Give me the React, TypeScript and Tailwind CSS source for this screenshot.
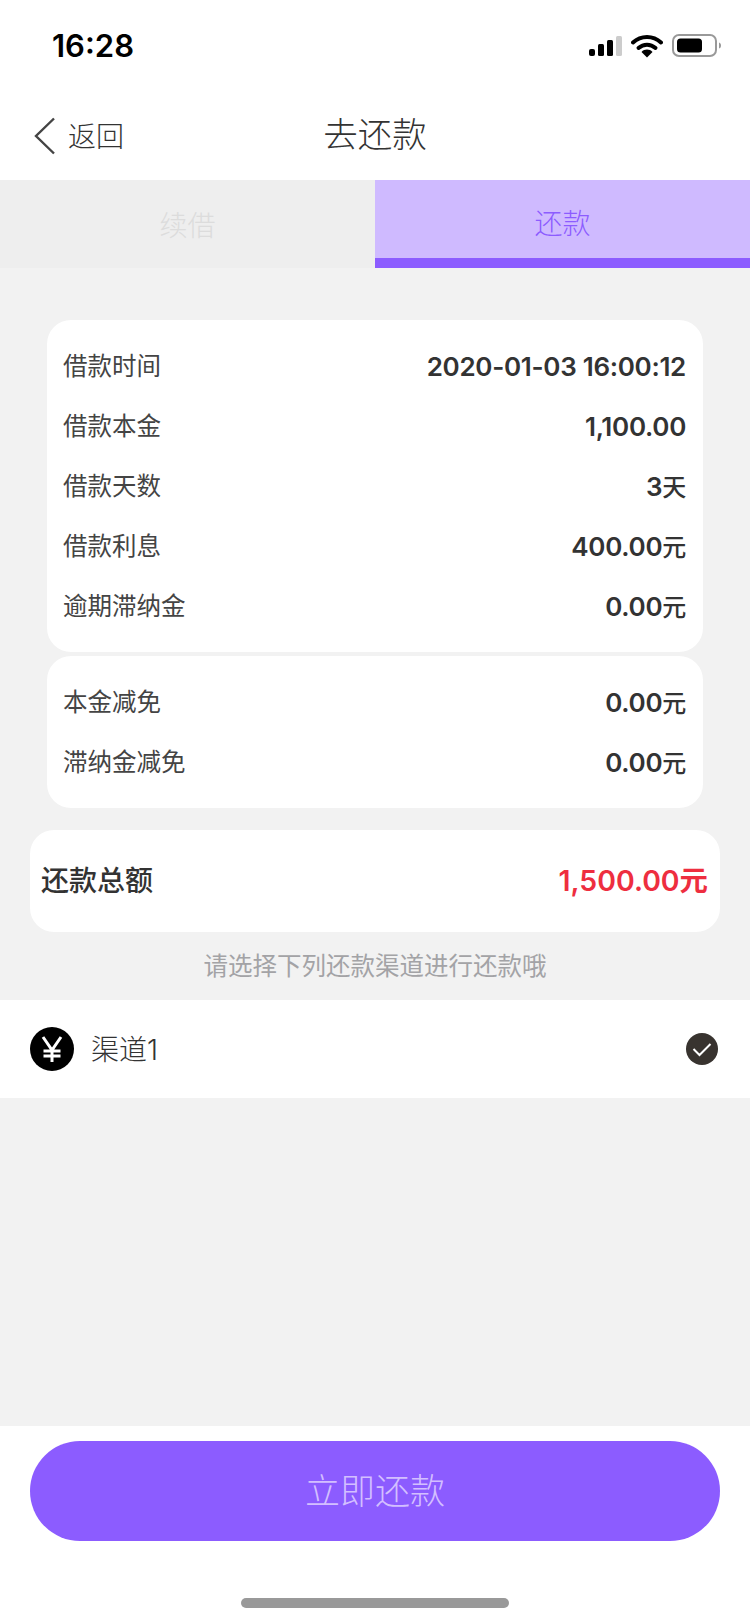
const cjk = "font-['Inter','Noto_Sans_CJK_SC',sans-serif]";

type Row = { label: string; value: string; unit?: string };

const loanRows: Row[] = [
  { label: "借款时间", value: "2020-01-03 16:00:12" },
  { label: "借款本金", value: "1,100.00" },
  { label: "借款天数", value: "3", unit: "天" },
  { label: "借款利息", value: "400.00", unit: "元" },
  { label: "逾期滞纳金", value: "0.00", unit: "元" },
];

const reliefRows: Row[] = [
  { label: "本金减免", value: "0.00", unit: "元" },
  { label: "滞纳金减免", value: "0.00", unit: "元" },
];

function InfoRow({ label, value, unit }: Row) {
  return (
    <div className="flex h-[60px] items-center justify-between">
      <span className="text-[24.5px] font-normal text-[#444444]">{label}</span>
      <span className="text-[26px] font-semibold tracking-[-0.3px] text-[#333333]">
        {value}
        {unit && <span className="text-[24px] font-medium">{unit}</span>}
      </span>
    </div>
  );
}

function StatusIcons() {
  return (
    <div className="flex items-center">
      <svg width="34" height="22" viewBox="0 0 34 22" className="mr-[8px]">
        <rect x="0" y="14" width="6" height="7" rx="2" fill="#000" />
        <rect x="9" y="9" width="6" height="12" rx="1.5" fill="#000" />
        <rect x="18" y="5" width="6" height="16" rx="1.5" fill="#000" />
        <rect x="27" y="1" width="6" height="20" rx="1.5" fill="#cccccc" />
      </svg>
      <svg width="32" height="24" viewBox="0 0 32 24" className="mr-[9px]">
        <path d="M2 8.5C10 1 22 1 30 8.5" fill="none" stroke="#000" strokeWidth="4" strokeLinecap="round" />
        <path d="M7.5 14C12.5 9.5 19.5 9.5 24.5 14" fill="none" stroke="#000" strokeWidth="4" strokeLinecap="round" />
        <path d="M10.5 18C13.5 14.8 18.500 14.800 21.500 18L16 23.500Z" fill="#000" />
      </svg>
      <svg width="50" height="24" viewBox="0 0 50 24">
        <rect x="1" y="1" width="43" height="21" rx="6" fill="none" stroke="#999999" strokeWidth="2" />
        <rect x="5" y="4.500" width="25" height="14" rx="3.500" fill="#000" />
        <path d="M47 8.500C48.500 9 49 10 49 11.500C49 13 48.500 14 47 14.500Z" fill="#999999" />
      </svg>
    </div>
  );
}

export default function App() {
  return (
    <main className={`flex h-[1624px] w-[750px] flex-col overflow-hidden bg-[#f2f2f2] ${cjk}`}>
      <div className="flex h-[92px] items-center justify-between bg-white pl-[52px] pr-[28px]">
        <span className="font-['Inter',sans-serif] text-[31px] font-semibold text-black">16:28</span>
        <StatusIcons />
      </div>

      <header className="relative flex h-[88px] items-center bg-white pl-[34px]">
        <svg width="22" height="38" viewBox="0 0 22 38" className="mr-[12px]">
          <path d="M20 1.500L2 19L20 36.500" fill="none" stroke="#444444" strokeWidth="2.400" />
        </svg>
        <span className="pt-[2px] text-[28px] font-light text-[#333333]">返回</span>
        <h1 className="absolute inset-x-0 pb-[2px] text-center text-[34.500px] font-light text-[#333333]">去还款</h1>
      </header>

      <div className="flex h-[88px]">
        <div className="flex flex-1 items-center justify-center bg-[#eeeeee] pt-[4px] text-[28px] font-light text-[#dcdcdc]">
          续借
        </div>
        <div className="flex flex-1 items-center justify-center border-b-[10px] border-[#8c5cff] bg-[#cfbaff] pt-[10px] text-[28px] font-light text-[#8c5cff]">
          还款
        </div>
      </div>

      <section className="mx-[47px] mt-[52px] rounded-[24px] bg-white py-[16px] pl-[16px] pr-[17px]">
        {loanRows.map((row) => (
          <InfoRow key={row.label} {...row} />
        ))}
      </section>

      <section className="mx-[47px] mt-[4px] rounded-[24px] bg-white py-[16px] pl-[16px] pr-[17px]">
        {reliefRows.map((row) => (
          <InfoRow key={row.label} {...row} />
        ))}
      </section>

      <section className="mx-[30px] mt-[22px] flex h-[102px] items-center justify-between rounded-[24px] bg-white pl-[11px] pr-[12px]">
        <span className="text-[28px] font-medium text-[#333333]">还款总额</span>
        <span className="text-[28.400px] font-semibold text-[#ee2e3f]">1,500.00元</span>
      </section>

      <p className="flex h-[68px] items-center justify-center text-[24.500px] font-normal text-[#a3a3a6]">
        请选择下列还款渠道进行还款哦
      </p>

      <div className="flex h-[98px] items-center justify-between bg-white pl-[30px] pr-[32px]">
        <div className="flex items-center">
          <svg width="44" height="44" viewBox="0 0 44 44" className="mr-[17px]">
            <circle cx="22" cy="22" r="22" fill="#000" />
            <path d="M13 10L22 23L31 10M22 23V35M13.500 24H30.500M13.500 29H30.500" fill="none" stroke="#fff" strokeWidth="3" />
          </svg>
          <span className="pt-[2px] text-[28px] font-light text-[#333333]">渠道1</span>
        </div>
        <svg width="32" height="32" viewBox="0 0 32 32">
          <circle cx="16" cy="16" r="16" fill="#38332f" />
          <path d="M7.500 16L13.500 22L24.500 11" fill="none" stroke="#fff" strokeWidth="2" />
        </svg>
      </div>

      <div className="flex-1" />

      <footer className="flex h-[198px] flex-col items-center bg-white px-[30px] pt-[15px]">
        <button
          type="button"
          className="h-[100px] w-full rounded-[50px] bg-[#8c5cff] text-[35px] font-light text-[#d3bfff]"
        >
          立即还款
        </button>
        <div className="mt-[57px] h-[10px] w-[268px] rounded-[5px] bg-[#999999]" />
      </footer>
    </main>
  );
}
